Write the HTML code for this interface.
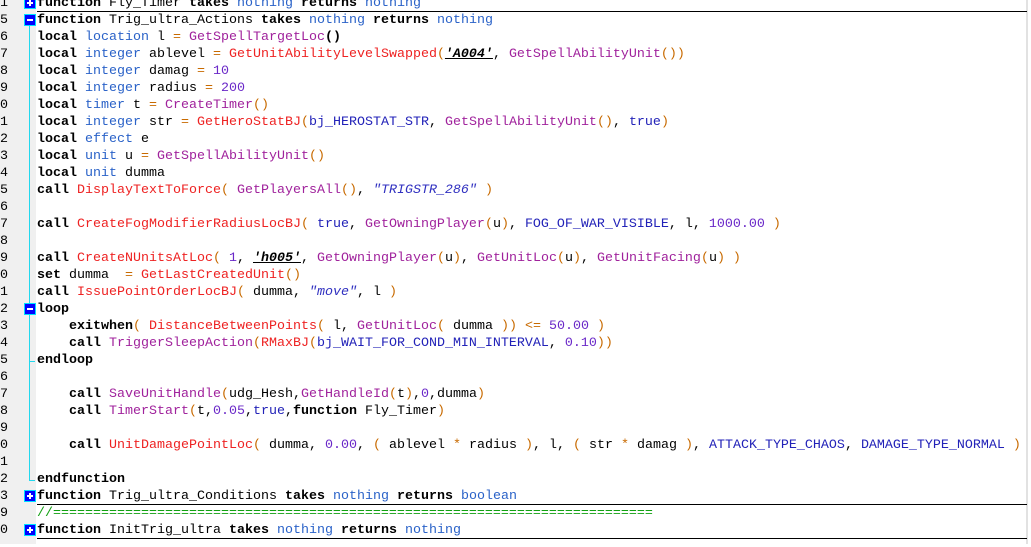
<!DOCTYPE html>
<html><head><meta charset="utf-8"><style>
html,body{margin:0;padding:0;width:1031px;height:544px;overflow:hidden;background:#fff}
#g{position:absolute;left:0;top:0;width:36px;height:544px;background:#f0f0f0}
#sb{position:absolute;left:1026px;top:0;width:2px;height:544px;background:#e2e2e2}
#w{position:absolute;left:0;top:3px;width:1031px;height:544px}
.r{position:absolute;left:0;height:17px;line-height:17px;font-family:"Liberation Mono","Courier New",monospace;font-size:13.33px;white-space:pre;color:#000;width:1027px}
.n{position:absolute;left:0;width:14px;color:#000}
.t{position:absolute;left:37px}
.u{position:absolute;left:37px;right:0;bottom:0;height:0;border-bottom:1.5px solid #000}
.k{font-weight:bold}
.ty{color:#2a62c8}
.nf{color:#a0229c}
.bj{color:#ee2222}
.p{color:#c86a00}
.c{color:#2222b8}
.num{color:#6a28c8}
.s{color:#3030c0;font-style:italic}
.raw{font-style:italic;font-weight:bold;text-decoration:underline}
.cm{color:#11a011}
.m{position:absolute;left:24px;width:10px;height:10px;border:1px solid #00e0ff;background:#0000ff}
.m:before{content:"";position:absolute;left:2px;top:4px;width:6px;height:2px;background:#fff}
.m.pl:after{content:"";position:absolute;left:4px;top:2px;width:2px;height:6px;background:#fff}
.vl{position:absolute;left:29px;width:1px;background:#22d8ee}
.hl{position:absolute;left:29px;width:6px;height:1px;background:#22d8ee}
</style></head><body>
<div id="g"></div><div id="sb"></div>
<div id="w">
<div class="vl" style="top:21px;height:456px"></div>
<div class="hl" style="top:477px"></div>
<div class="hl" style="top:358px"></div>

<div class="r" style="top:-8px"><span class="n">1</span><span class="t"><span class="k">function</span> Fly_Timer <span class="k">takes</span> <span class="ty">nothing</span> <span class="k">returns</span> <span class="ty">nothing</span></span><span class="u"></span></div>
<div class="r" style="top:9px"><span class="n">5</span><span class="t"><span class="k">function</span> Trig_ultra_Actions <span class="k">takes</span> <span class="ty">nothing</span> <span class="k">returns</span> <span class="ty">nothing</span></span></div>
<div class="r" style="top:26px"><span class="n">6</span><span class="t"><span class="k">local</span> <span class="ty">location</span> l <span class="p">=</span> <span class="nf">GetSpellTargetLoc</span><span class="k">()</span></span></div>
<div class="r" style="top:43px"><span class="n">7</span><span class="t"><span class="k">local</span> <span class="ty">integer</span> ablevel <span class="p">=</span> <span class="bj">GetUnitAbilityLevelSwapped</span><span class="p">(</span><span class="raw">'A004'</span>, <span class="nf">GetSpellAbilityUnit</span><span class="p">())</span></span></div>
<div class="r" style="top:60px"><span class="n">8</span><span class="t"><span class="k">local</span> <span class="ty">integer</span> damag <span class="p">=</span> <span class="num">10</span></span></div>
<div class="r" style="top:77px"><span class="n">9</span><span class="t"><span class="k">local</span> <span class="ty">integer</span> radius <span class="p">=</span> <span class="num">200</span></span></div>
<div class="r" style="top:94px"><span class="n">0</span><span class="t"><span class="k">local</span> <span class="ty">timer</span> t <span class="p">=</span> <span class="nf">CreateTimer</span><span class="p">()</span></span></div>
<div class="r" style="top:111px"><span class="n">1</span><span class="t"><span class="k">local</span> <span class="ty">integer</span> str <span class="p">=</span> <span class="bj">GetHeroStatBJ</span><span class="p">(</span><span class="c">bj_HEROSTAT_STR</span>, <span class="nf">GetSpellAbilityUnit</span><span class="p">()</span>, <span class="c">true</span><span class="p">)</span></span></div>
<div class="r" style="top:128px"><span class="n">2</span><span class="t"><span class="k">local</span> <span class="ty">effect</span> e</span></div>
<div class="r" style="top:145px"><span class="n">3</span><span class="t"><span class="k">local</span> <span class="ty">unit</span> u <span class="p">=</span> <span class="nf">GetSpellAbilityUnit</span><span class="p">()</span></span></div>
<div class="r" style="top:162px"><span class="n">4</span><span class="t"><span class="k">local</span> <span class="ty">unit</span> dumma</span></div>
<div class="r" style="top:179px"><span class="n">5</span><span class="t"><span class="k">call</span> <span class="bj">DisplayTextToForce</span><span class="p">(</span> <span class="nf">GetPlayersAll</span><span class="p">()</span>, <span class="s">"TRIGSTR_286"</span> <span class="p">)</span></span></div>
<div class="r" style="top:196px"><span class="n">6</span></div>
<div class="r" style="top:213px"><span class="n">7</span><span class="t"><span class="k">call</span> <span class="bj">CreateFogModifierRadiusLocBJ</span><span class="p">(</span> <span class="c">true</span>, <span class="nf">GetOwningPlayer</span><span class="p">(</span>u<span class="p">)</span>, <span class="c">FOG_OF_WAR_VISIBLE</span>, l, <span class="num">1000.00</span> <span class="p">)</span></span></div>
<div class="r" style="top:230px"><span class="n">8</span></div>
<div class="r" style="top:247px"><span class="n">9</span><span class="t"><span class="k">call</span> <span class="bj">CreateNUnitsAtLoc</span><span class="p">(</span> <span class="num">1</span>, <span class="raw">'h005'</span>, <span class="nf">GetOwningPlayer</span><span class="p">(</span>u<span class="p">)</span>, <span class="nf">GetUnitLoc</span><span class="p">(</span>u<span class="p">)</span>, <span class="nf">GetUnitFacing</span><span class="p">(</span>u<span class="p">) )</span></span></div>
<div class="r" style="top:264px"><span class="n">0</span><span class="t"><span class="k">set</span> dumma  <span class="p">=</span> <span class="bj">GetLastCreatedUnit</span><span class="p">()</span></span></div>
<div class="r" style="top:281px"><span class="n">1</span><span class="t"><span class="k">call</span> <span class="bj">IssuePointOrderLocBJ</span><span class="p">(</span> dumma, <span class="s">"move"</span>, l <span class="p">)</span></span></div>
<div class="r" style="top:298px"><span class="n">2</span><span class="t"><span class="k">loop</span></span></div>
<div class="r" style="top:315px"><span class="n">3</span><span class="t">    <span class="k">exitwhen</span><span class="p">(</span> <span class="bj">DistanceBetweenPoints</span><span class="p">(</span> l, <span class="nf">GetUnitLoc</span><span class="p">(</span> dumma <span class="p">)) &lt;=</span> <span class="num">50.00</span> <span class="p">)</span></span></div>
<div class="r" style="top:332px"><span class="n">4</span><span class="t">    <span class="k">call</span> <span class="nf">TriggerSleepAction</span><span class="p">(</span><span class="bj">RMaxBJ</span><span class="p">(</span><span class="c">bj_WAIT_FOR_COND_MIN_INTERVAL</span>, <span class="num">0.10</span><span class="p">))</span></span></div>
<div class="r" style="top:349px"><span class="n">5</span><span class="t"><span class="k">endloop</span></span></div>
<div class="r" style="top:366px"><span class="n">6</span></div>
<div class="r" style="top:383px"><span class="n">7</span><span class="t">    <span class="k">call</span> <span class="nf">SaveUnitHandle</span><span class="p">(</span>udg_Hesh,<span class="nf">GetHandleId</span><span class="p">(</span>t<span class="p">)</span>,<span class="num">0</span>,dumma<span class="p">)</span></span></div>
<div class="r" style="top:400px"><span class="n">8</span><span class="t">    <span class="k">call</span> <span class="nf">TimerStart</span><span class="p">(</span>t,<span class="num">0.05</span>,<span class="c">true</span>,<span class="k">function</span> Fly_Timer<span class="p">)</span></span></div>
<div class="r" style="top:417px"><span class="n">9</span></div>
<div class="r" style="top:434px"><span class="n">0</span><span class="t">    <span class="k">call</span> <span class="bj">UnitDamagePointLoc</span><span class="p">(</span> dumma, <span class="num">0.00</span>, <span class="p">(</span> ablevel <span class="p">*</span> radius <span class="p">)</span>, l, <span class="p">(</span> str <span class="p">*</span> damag <span class="p">)</span>, <span class="c">ATTACK_TYPE_CHAOS</span>, <span class="c">DAMAGE_TYPE_NORMAL</span> <span class="p">)</span></span></div>
<div class="r" style="top:451px"><span class="n">1</span></div>
<div class="r" style="top:468px"><span class="n">2</span><span class="t"><span class="k">endfunction</span></span></div>
<div class="r" style="top:485px"><span class="n">3</span><span class="t"><span class="k">function</span> Trig_ultra_Conditions <span class="k">takes</span> <span class="ty">nothing</span> <span class="k">returns</span> <span class="ty">boolean</span></span><span class="u"></span></div>
<div class="r" style="top:502px"><span class="n">9</span><span class="t"><span class="cm">//===========================================================================</span></span></div>
<div class="r" style="top:519px"><span class="n">0</span><span class="t"><span class="k">function</span> InitTrig_ultra <span class="k">takes</span> <span class="ty">nothing</span> <span class="k">returns</span> <span class="ty">nothing</span></span><span class="u"></span></div>

<div class="m pl" style="top:-6px"></div>
<div class="m" style="top:11px"></div>
<div class="m" style="top:300px"></div>
<div class="m pl" style="top:487px"></div>
<div class="m pl" style="top:521px"></div>
</div>
</body></html>
